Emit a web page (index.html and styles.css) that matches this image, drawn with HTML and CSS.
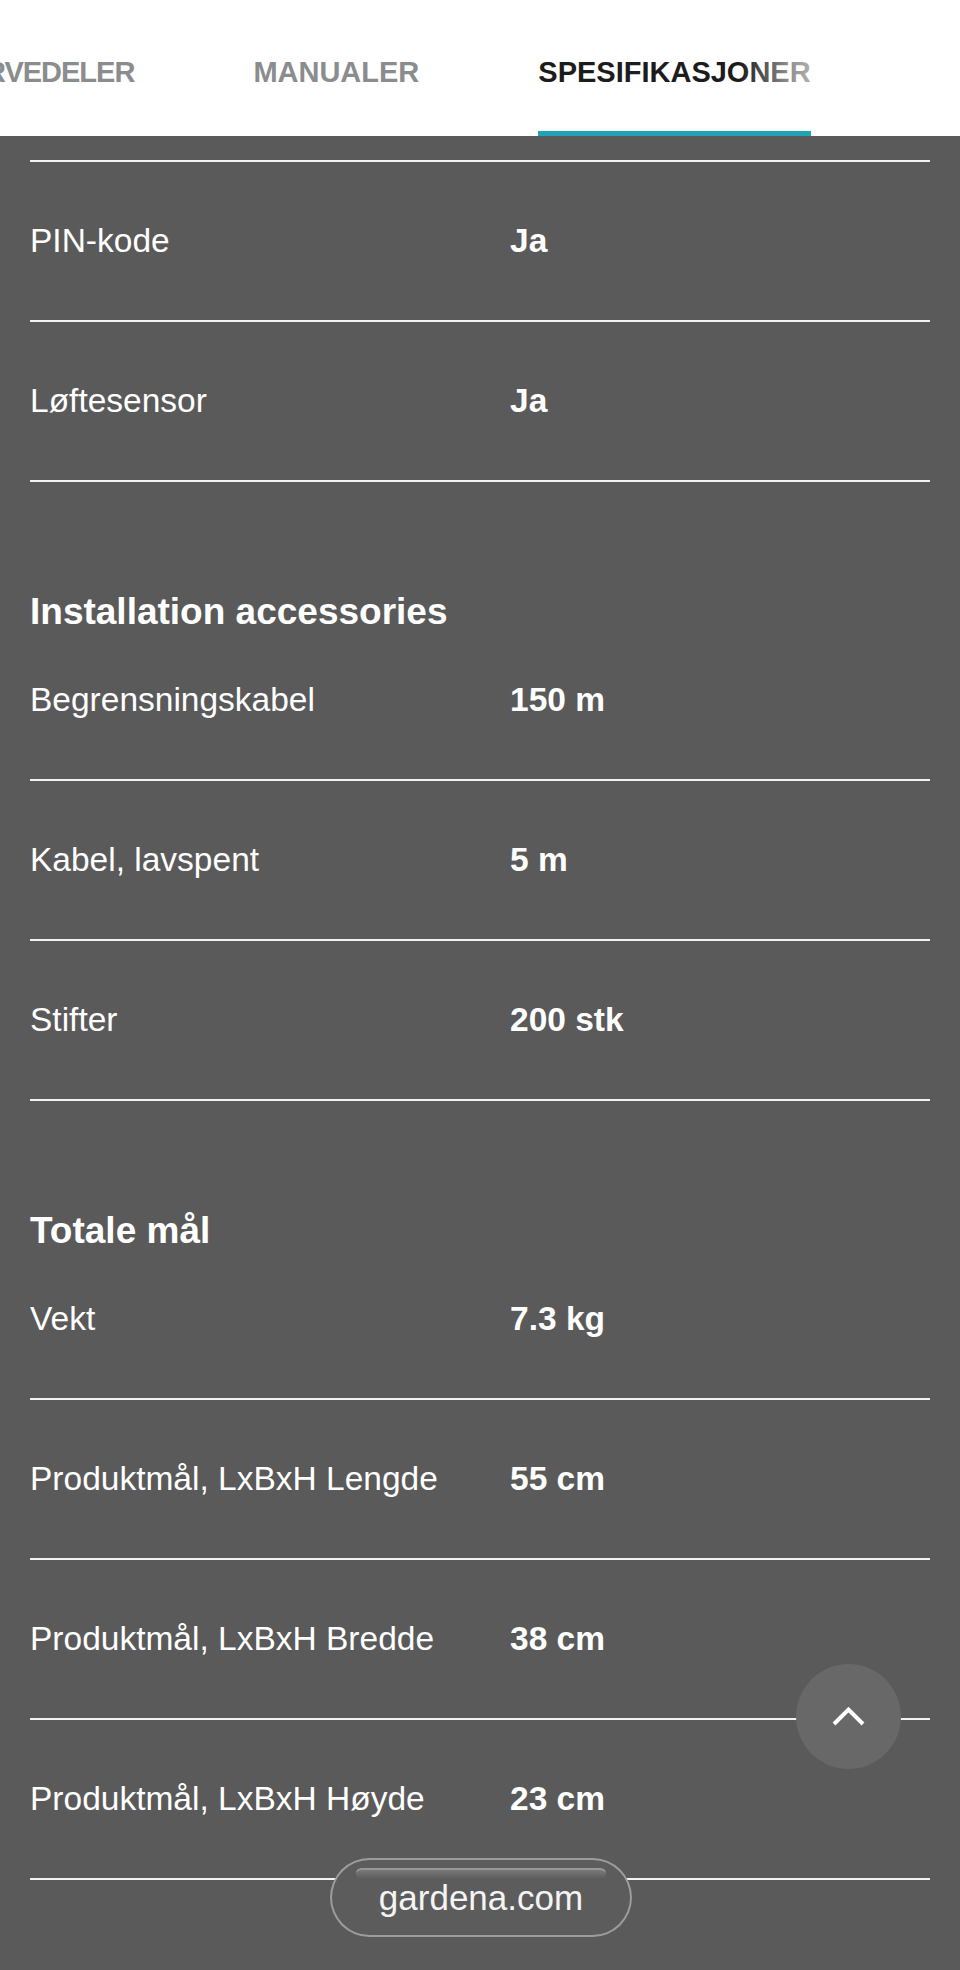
FILE: index.html
```html
<!DOCTYPE html>
<html lang="no">
<head>
  <meta charset="UTF-8">
  <meta name="viewport" content="width=device-width, initial-scale=1.0">
  <title>Spesifikasjoner</title>
  <link rel="stylesheet" href="styles.css">
</head>
<body>
  <!-- Faner -->
  <header class="tabs">
    <nav class="tab-row">
      <a class="tab tab-first">RESERVEDELER</a>
      <a class="tab">MANUALER</a>
      <a class="tab tab-active">SPESIFIKASJONER</a>
    </nav>
    <div class="tab-fade"></div>
  </header>

  <!-- Spesifikasjoner -->
  <main class="specs">
    <div class="spec-cut"></div>

    <section class="spec-group">
      <div class="spec-row"><span class="spec-label">PIN-kode</span><span class="spec-value">Ja</span></div>
      <div class="spec-row"><span class="spec-label">Løftesensor</span><span class="spec-value">Ja</span></div>
    </section>

    <section class="spec-group">
      <h3 class="group-title">Installation accessories</h3>
      <div class="spec-row"><span class="spec-label">Begrensningskabel</span><span class="spec-value">150 m</span></div>
      <div class="spec-row"><span class="spec-label">Kabel, lavspent</span><span class="spec-value">5 m</span></div>
      <div class="spec-row"><span class="spec-label">Stifter</span><span class="spec-value">200 stk</span></div>
    </section>

    <section class="spec-group">
      <h3 class="group-title">Totale mål</h3>
      <div class="spec-row"><span class="spec-label">Vekt</span><span class="spec-value">7.3 kg</span></div>
      <div class="spec-row"><span class="spec-label">Produktmål, LxBxH Lengde</span><span class="spec-value">55 cm</span></div>
      <div class="spec-row"><span class="spec-label">Produktmål, LxBxH Bredde</span><span class="spec-value">38 cm</span></div>
      <div class="spec-row"><span class="spec-label">Produktmål, LxBxH Høyde</span><span class="spec-value">23 cm</span></div>
    </section>
  </main>

  <button class="to-top" aria-label="Til toppen">
    <svg width="105" height="105" viewBox="0 0 105 105">
      <polyline points="38,60 52.5,45.5 67,60" fill="none" stroke="#fff" stroke-width="4"/>
    </svg>
  </button>

  <div class="url-pill">gardena.com</div>
</body>
</html>
```

FILE: styles.css
```css
body {
  margin: 0;
  background: #5a5a5a;
  font-family: "Liberation Sans", Arial, sans-serif;
  color: #fff;
  height: 1970px;
  overflow: hidden;
  position: relative;
}

/* faner */
.tabs {
  position: relative;
  height: 136px;
  background: #fff;
  overflow: hidden;
}
.tab-row {
  display: flex;
  gap: 119px;
  margin-left: -90px;
  height: 136px;
}
.tab {
  box-sizing: border-box;
  padding-top: 55px;
  font-size: 29px;
  line-height: 34px;
  font-weight: bold;
  color: #8a8c8e;
  white-space: nowrap;
}
.tab-first {
  letter-spacing: -1px;
}
.tab-active {
  color: #1c1c1c;
  border-bottom: 5px solid #1fa3b5;
}
.tab-fade {
  position: absolute;
  top: 0;
  right: 0;
  width: 220px;
  height: 128px;
  background: linear-gradient(to right, rgba(255,255,255,0) 0%, rgba(255,255,255,0.5) 22%, rgba(255,255,255,0.9) 50%, #fff 100%);
}

/* spesifikasjoner */
.specs {
  padding: 0 30px;
}
.spec-cut {
  height: 24px;
  border-bottom: 2px solid #f2f2f2;
}
.spec-row {
  display: grid;
  grid-template-columns: 480px 1fr;
  padding: 59px 0;
  font-size: 33.5px;
  line-height: 40px;
  border-bottom: 2px solid #f2f2f2;
}
.spec-value {
  font-weight: bold;
}
.group-title {
  margin: 108px 0 0;
  font-size: 37px;
  line-height: 44px;
  font-weight: bold;
}
.group-title + .spec-row {
  padding-top: 46px;
}

/* flytende knapper */
.to-top {
  position: absolute;
  left: 796px;
  top: 1664px;
  width: 105px;
  height: 105px;
  padding: 0;
  border: none;
  border-radius: 50%;
  background: #686868;
}
.to-top svg {
  display: block;
}
.url-pill {
  position: absolute;
  left: 330px;
  top: 1858px;
  box-sizing: border-box;
  width: 302px;
  height: 79px;
  border-radius: 40px;
  border: 2px solid rgba(210,210,210,0.55);
  background: #5c5c5c;
  color: #f4f4f4;
  font-size: 35px;
  line-height: 75px;
  text-align: center;
}
.url-pill::before {
  content: "";
  position: absolute;
  left: 24px;
  right: 24px;
  top: 8px;
  height: 9px;
  border-radius: 6px;
  border-top: 2px solid rgba(255,255,255,0.35);
  background: linear-gradient(rgba(255,255,255,0.18), rgba(255,255,255,0));
}
```
